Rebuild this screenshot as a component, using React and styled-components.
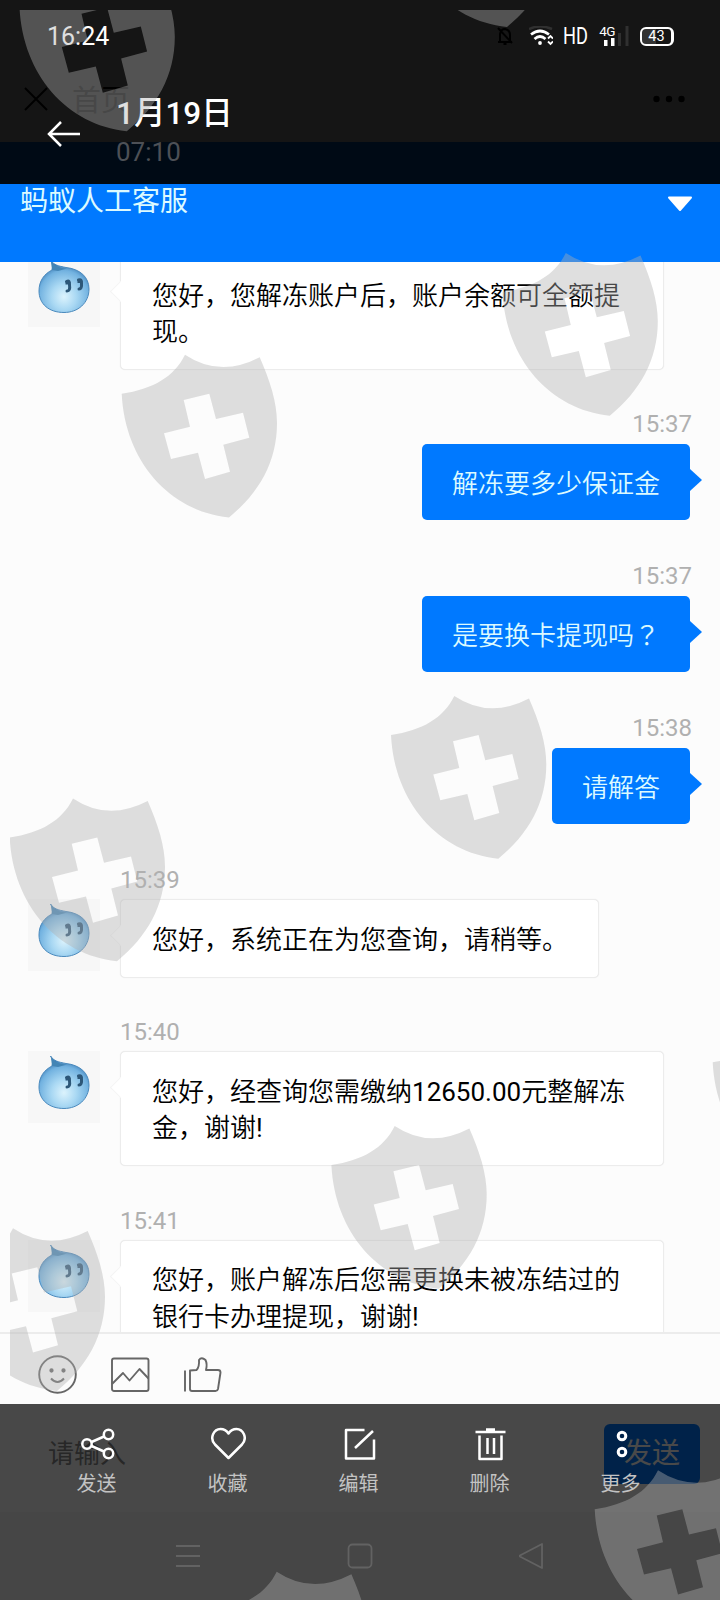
import React from 'react';
import styled, { createGlobalStyle } from 'styled-components';

const colors = {
  blue: '#0079ff',
  page: '#fcfcfc',
  line: '#ececec',
  time: '#b0b0b0',
  mark: '#b0b0b0'
};

const GlobalStyle = createGlobalStyle`
  * {
    box-sizing: border-box;
  }
  body {
    margin: 0;
    font-family: Roboto, 'Noto Sans CJK SC', sans-serif;
  }
  svg {
    display: block;
    flex: none;
  }
`;

const Screen = styled.div`
  position: relative;
  display: flex;
  flex-direction: column;
  width: 720px;
  height: 1600px;
  overflow: hidden;
  background: ${colors.page};
`;

/* chat page */

const PageBar = styled.div`
  display: flex;
  align-items: center;
  height: 142px;
  padding: 56px 35px 0 24px;
  font-size: 29px;
  color: #000;
`;

const PageTitle = styled.div`
  flex: 1;
  margin-left: 24px;
  padding-top: 4px;
  line-height: 36px;
`;

const ChatHeader = styled.div`
  display: flex;
  justify-content: space-between;
  align-items: flex-start;
  height: 120px;
  padding: 40px 27px 0 20px;
  font-size: 28px;
  line-height: 40px;
  color: #dcfaff;
  background: ${colors.blue};

  svg {
    margin-top: 14px;
  }
`;

const Messages = styled.div`
  height: 1070px;
  overflow: hidden;
  padding: 0 30px 0 28px;
`;

const Row = styled.div`
  display: flex;
  justify-content: ${p => (p.$mine ? 'flex-end' : 'flex-start')};
  margin: ${p => (p.$mine ? 0 : '-1px 0')};
`;

const Time = styled.div`
  height: 75.6px;
  padding: 37.5px 0 0 92px;
  font-size: 24px;
  line-height: 36px;
  text-align: ${p => (p.$mine ? 'right' : 'left')};
  margin-right: -2px;
  color: ${colors.time};
`;

const AvatarBox = styled.div`
  flex: none;
  width: 72px;
  height: 72px;
  margin-right: 20px;
  background: #f7f7f7;
`;

const Bubble = styled.div`
  position: relative;
  max-width: 544px;
  padding: ${p => (p.$mine ? '21.5px 30px 18px' : '21.5px 30px 18.5px 31px')};
  margin-bottom: ${p => (p.$mine ? '0.5px' : 0)};
  border-radius: 5px;
  font-size: 26px;
  font-weight: 350;
  line-height: 36.4px;
  color: ${p => (p.$mine ? '#dcfaff' : '#000')};
  background: ${p => (p.$mine ? colors.blue : '#fff')};
  border: ${p => (p.$mine ? 0 : `1px solid ${colors.line}`)};
  box-shadow: ${p => (p.$mine ? 'none' : '0 0 1px #e4e4e4')};
`;

const MyTail = styled.i`
  position: absolute;
  left: 100%;
  top: 25px;
  border: 11px solid transparent;
  border-left: 12px solid ${colors.blue};
  border-right: 0;
`;

const TheirTail = styled.i`
  position: absolute;
  left: -8px;
  top: 28px;
  width: 15px;
  height: 15px;
  transform: rotate(45deg);
  background: #fff;
  border: solid #f4f4f4;
  border-width: 0 0 1px 1px;
`;

const Latin = styled.span`
  font-weight: 400;
`;

const Mark = styled.span`
  font-family: 'Noto Sans CJK TC', sans-serif;
  line-height: 1;
`;

const Tools = styled.div`
  display: flex;
  align-items: center;
  gap: 34px;
  height: 72px;
  padding: 10px 38px 0;
  border-top: 2px solid ${colors.line};
`;

const InputBar = styled.div`
  display: flex;
  align-items: center;
  height: 108px;
  padding: 0 20px 8px 28px;
`;

const Input = styled.div`
  flex: 1;
  height: 76px;
  padding: 0 20px;
  font-size: 26px;
  line-height: 76px;
  color: #8a8a8a;
`;

const SendButton = styled.div`
  width: 96px;
  height: 60px;
  border-radius: 6px;
  font-size: 28px;
  line-height: 60px;
  text-align: center;
  color: #fff;
  background: ${colors.blue};
`;

const PageEnd = styled.div`
  flex: 1;
  background: #f3f3f3;
`;

/* gallery chrome above the chat */

const GalleryTop = styled.div`
  position: absolute;
  inset: 0 0 auto;
  height: 184px;
  background: rgba(0, 0, 0, 0.917);
`;

const StatusBar = styled.div`
  display: flex;
  align-items: center;
  height: 72px;
  padding: 0 46px 0 47px;
  color: #fff;
`;

const Clock = styled.div`
  flex: 1;
  font-size: 25px;
`;

const Hd = styled.div`
  width: 24px;
  margin: 0 12px 0 10px;
  font-size: 24px;
  transform: scaleX(0.76);
  transform-origin: left;
`;

const Signal = styled.div`
  display: flex;
  align-items: flex-end;
  width: 30px;
  height: 20px;
  margin-right: 11px;
`;

const Network = styled.div`
  display: flex;
  flex-direction: column;
  align-items: center;
  width: 16px;
  margin-right: 3px;
  font-size: 13.5px;
  line-height: 11px;
  letter-spacing: -0.6px;

  svg {
    margin: 1px 0 0 4px;
  }
`;

const Battery = styled.div`
  width: 34px;
  height: 19px;
  border: 2px solid #fff;
  border-right-width: 3px;
  border-radius: 6px;
  font-size: 14.5px;
  line-height: 16px;
  text-align: center;
  background: linear-gradient(90deg, #333 48%, #151515 48%);
`;

const TitleRow = styled.div`
  display: flex;
  align-items: flex-start;
  padding-left: 47px;

  > svg {
    margin-top: 49px;
  }
`;

const Heading = styled.div`
  margin: 22px 0 0 36px;
`;

const DateText = styled.div`
  font-size: 31.5px;
  font-weight: 500;
  line-height: 39px;
  color: #fff;
`;

const DateTime = styled.div`
  font-size: 26px;
  line-height: 39px;
  color: #4d5056;
`;

const GalleryBottom = styled.div`
  position: absolute;
  inset: auto 0 0;
  height: 196px;
  background: rgba(0, 0, 0, 0.713);
`;

const Actions = styled.div`
  display: flex;
  height: 108px;
  padding: 22px 0 0 31px;
`;

const Action = styled.div`
  display: flex;
  flex-direction: column;
  align-items: center;
  gap: 7px;
  width: 131px;
  font-size: 20px;
  line-height: 30px;
  color: #c3c3c3;
`;

const NavBar = styled.div`
  display: flex;
  justify-content: space-between;
  align-items: center;
  height: 88px;
  padding: 0 175px;
`;

const Watermark = styled.svg`
  position: absolute;
  inset: 0;
  pointer-events: none;
`;

const shields = [
  [18.8, -32.3],
  [399, -136.5],
  [501.8, 252.3],
  [121, 354],
  [390.3, 695.3],
  [9, 797.8],
  [712, 1022.6],
  [330.7, 1125.3],
  [-51, 1227.6],
  [594, 1469.6],
  [212.7, 1571]
];

const shieldPath =
  'M.7 39.7C32 35 53 23 64 .7Q99 24 138.7 3.3C149 27 156 48 156 69C156 108 138 139 108 163.5C48 157 4 107 .7 39.7Z' +
  'M62.7 46 69 72.7 43 79.3 50 105 77 98.7 84 125 109 117.7 102.3 90.7 128.3 83.7 122 58.7 95 65 88.3 39.7Z';

const messages = [
  { text: '您好，您解冻账户后，账户余额可全额提现。' },
  { time: '15:37', mine: true, text: '解冻要多少保证金' },
  { time: '15:37', mine: true, text: '是要换卡提现吗', mark: '？' },
  { time: '15:38', mine: true, text: '请解答' },
  { time: '15:39', text: '您好，系统正在为您查询，请稍等。' },
  { time: '15:40', text: '您好，经查询您需缴纳12650.00元整解冻金，谢谢!' },
  { time: '15:41', text: '您好，账户解冻后您需更换未被冻结过的银行卡办理提现，谢谢!' }
];

const Avatar = () => (
  <AvatarBox>
    <svg width="72" height="72" viewBox="0 0 72 72">
      <defs>
        <radialGradient id="drop" cx=".5" cy=".7" r=".62">
          <stop offset="0" stopColor="#dcf3fd" />
          <stop offset=".4" stopColor="#a9d8f3" />
          <stop offset=".8" stopColor="#72b2e0" />
          <stop offset="1" stopColor="#3d7cb5" />
        </radialGradient>
      </defs>
      <path
        d="M22.5 5C26 10 30 11 38 12.5C52 14 61 22 61 34C61 48 50 57.500 36 57.500C21 57.500 11 49 11 36C11 26 16 19 24 15C25 12 24.500 8 22.500 5Z"
        fill="url(#drop)"
        stroke="#4b8abd"
        strokeWidth="1"
      />
      <path d="M23 6C26 11 31 13 39 13.500L30 16 24 15Z" fill="#4385b5" />
      <g fill="none" stroke="#2d5778" strokeWidth="3" strokeLinecap="round">
        <path d="M38.500 26.500Q42 24.500 41.500 30Q42.500 36 39 36" />
        <path d="M50.500 25Q54 23.500 53.500 28.500Q54 34 51 34" />
      </g>
      <path d="M37.500 28H41M49.500 26.500H53" stroke="#2d5778" strokeWidth="3" />
    </svg>
  </AvatarBox>
);

const renderText = text =>
  text.split(/([\d.!]+)/).map((part, i) => (i % 2 ? <Latin key={i}>{part}</Latin> : part));

const Message = ({ time, mine, text, mark }) => (
  <>
    {time && <Time $mine={mine}>{time}</Time>}
    <Row $mine={mine}>
      {!mine && <Avatar />}
      <Bubble $mine={mine}>
        {mine ? <MyTail /> : <TheirTail />}
        {renderText(text)}
        {mark && <Mark>{mark}</Mark>}
      </Bubble>
    </Row>
  </>
);

const FirstMessage = styled.div`
  margin-top: -7px;
`;

const Icon = ({ size = 36, width = 2.5, color = '#fff', children }) => (
  <svg
    width={size}
    height={size}
    viewBox={`0 0 ${size} ${size}`}
    fill="none"
    stroke={color}
    strokeWidth={width}
    strokeLinejoin="round"
  >
    {children}
  </svg>
);

const actions = [
  {
    label: '发送',
    icon: (
      <>
        <circle cx="8" cy="18" r="4.700" />
        <circle cx="29.500" cy="8.500" r="4.700" />
        <circle cx="29.500" cy="27.500" r="4.700" />
        <path d="M12.500 16 25 10.500M12.500 20 25 25.500" />
      </>
    )
  },
  {
    label: '收藏',
    icon: (
      <path d="M18.500 32 5 18.500C-1 12 4 3 10.500 3C14 3 16.500 4.500 18.500 7.500C20.500 4.500 23 3 26.500 3C33 3 38 12 32 18.500Z" />
    )
  },
  {
    label: '编辑',
    icon: <path d="M23.500 4H5V32.500H33V13.500M14 22 32 5" />
  },
  {
    label: '删除',
    icon: <path d="M3.500 6H33.500M14 3.500H23M7.500 9.500V33H29.500V9.500M15.500 12V28M22 12V28" />
  },
  {
    label: '更多',
    icon: (
      <>
        <circle cx="19" cy="10" r="3.800" strokeWidth="3" />
        <circle cx="19" cy="26" r="3.800" strokeWidth="3" />
      </>
    )
  }
];

const ChatPage = () => (
  <>
    <PageBar>
      <Icon size={24} color="#000" width={2}>
        <path d="M1 1 23 23M23 1 1 23" />
      </Icon>
      <PageTitle>首页</PageTitle>
      <svg width="32" height="8" viewBox="0 0 32 8">
        <circle cx="3.500" cy="4" r="3.200" />
        <circle cx="16" cy="4" r="3.200" />
        <circle cx="28.500" cy="4" r="3.200" />
      </svg>
    </PageBar>
    <ChatHeader>
      蚂蚁人工客服
      <svg width="26" height="16" viewBox="0 0 26 16">
        <path
          d="M2 1.500H24L13 14Z"
          fill="#fff"
          stroke="#fff"
          strokeWidth="2"
          strokeLinejoin="round"
        />
      </svg>
    </ChatHeader>
    <Messages>
      <FirstMessage>
        {messages.map((m, i) => (
          <Message key={i} {...m} />
        ))}
      </FirstMessage>
    </Messages>
    <Tools>
      <Icon size={39} color="#666" width={1.9}>
        <circle cx="19.500" cy="19.500" r="18.300" />
        <path d="M13 23.500Q19.500 30.500 26 23.500" />
        <circle cx="13.500" cy="15.500" r="1.200" fill="#666" />
        <circle cx="25.500" cy="15.500" r="1.200" fill="#666" />
      </Icon>
      <Icon size={39} color="#666" width={1.9}>
        <rect x="1" y="3.500" width="36.500" height="32.500" rx="2" />
        <path d="M1 29 12 18 18.500 25.500 28.500 14 37.500 23.500" />
      </Icon>
      <Icon size={39} color="#666" width={1.9}>
        <path d="M1 15.500V36.500M6 15.500V34Q6 36 8 36H31.500Q33.500 36 34 34L36.500 17.500Q36.500 15 34 15H22Q23.500 9 21.500 5Q17.500 1.500 15 5Q15.500 12 12.500 15Z" />
      </Icon>
    </Tools>
    <InputBar>
      <Input>请输入</Input>
      <SendButton>发送</SendButton>
    </InputBar>
    <PageEnd />
  </>
);

const WifiIcon = styled.svg`
  margin-left: 14px;
`;

const StatusIcons = () => (
  <>
    <Icon size={20} color="#000" width={2}>
      <path d="M3 16H17M5 15V8Q6 3 10 3Q15 4 15 9V15M8.500 18H11.500M3 2 17 17" />
    </Icon>
    <WifiIcon width="24" height="20" viewBox="0 0 24 20" fill="none" stroke="#fff">
      <path d="M0 3Q11-2 23 3" stroke="#303030" strokeWidth="2.500" />
      <path d="M2 8.500Q11 1.500 20 8.500M5.500 13Q11 8 16.500 13" strokeWidth="2.700" />
      <circle cx="11" cy="17" r="1.900" fill="#fff" stroke="none" />
      <path d="M19 12.500 21.500 10 24 12.500M19 15.500 21.500 18 24 15.500" strokeWidth="1.800" />
    </WifiIcon>
    <Hd>HD</Hd>
    <Signal>
      <Network>
        4G
        <svg width="11" height="8" viewBox="0 0 11 8" fill="#fff">
          <path d="M0 2H3.500V8H0ZM7 0H10.500V8H7Z" />
        </svg>
      </Network>
      <svg width="11" height="20" viewBox="0 0 11 20" fill="#303030">
        <path d="M0 7H3V20H0ZM7.500 0H10.500V20H7.500Z" />
      </svg>
    </Signal>
    <Battery>43</Battery>
  </>
);

const App = () => (
  <Screen>
    <GlobalStyle />
    <ChatPage />
    <GalleryTop>
      <StatusBar>
        <Clock>16:24</Clock>
        <StatusIcons />
      </StatusBar>
      <TitleRow>
        <svg width="33" height="26" viewBox="0 0 33 26">
          <path d="M14 1 2 13 14 25M2 13H33" fill="none" stroke="#fff" strokeWidth="2.500" />
        </svg>
        <Heading>
          <DateText>1月19日</DateText>
          <DateTime>07:10</DateTime>
        </Heading>
      </TitleRow>
    </GalleryTop>
    <GalleryBottom>
      <Actions>
        {actions.map(a => (
          <Action key={a.label}>
            <Icon>{a.icon}</Icon>
            {a.label}
          </Action>
        ))}
      </Actions>
      <NavBar>
        <Icon size={26} color="#626262" width={1.8}>
          <path d="M1 3H25M1 13H25M1 23H25" />
        </Icon>
        <Icon size={26} color="#626262" width={1.8}>
          <rect x="1.500" y="1.500" width="23" height="23" rx="4" />
        </Icon>
        <Icon size={26} color="#626262" width={1.8}>
          <path d="M0 13 23 1V25Z" />
        </Icon>
      </NavBar>
    </GalleryBottom>
    <Watermark width="720" height="1600" viewBox="0 0 720 1600">
      <clipPath id="bounds">
        <rect x="10" y="10" width="710" height="1590" />
      </clipPath>
      <g clipPath="url(#bounds)" fill={colors.mark} opacity=".407">
        {shields.map(([x, y]) => (
          <path key={y} d={shieldPath} fillRule="evenodd" transform={`translate(${x} ${y})`} />
        ))}
      </g>
    </Watermark>
  </Screen>
);

export default App;
